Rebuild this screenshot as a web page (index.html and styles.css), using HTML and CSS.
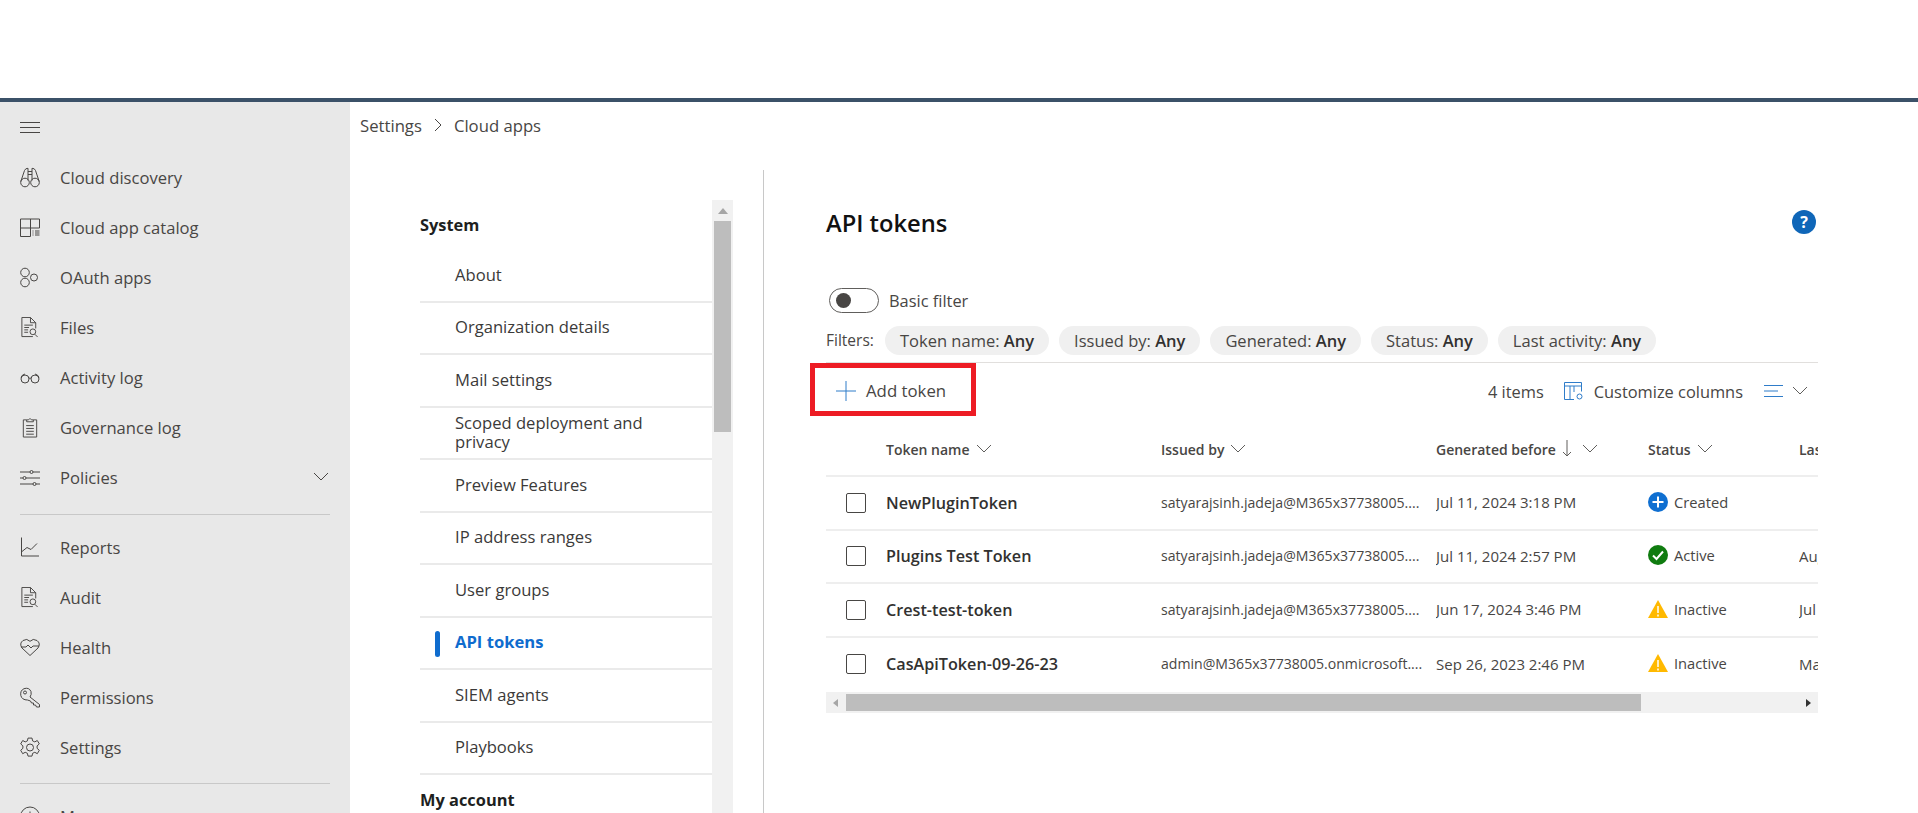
FILE: index.html
```html
<!DOCTYPE html>
<html lang="en">

<head>
    <meta charset="UTF-8">
    <title>Settings - Cloud apps</title>
    <link rel="stylesheet" href="styles.css">
</head>

<body>
    <header class="topbar"></header>

    <div class="layout">
        <nav class="sidebar">
            <div class="menu-btn">
                <svg width="20" height="12" viewBox="0 0 20 12"><path d="M0 .5h20M0 5.500h20M0 10.500h20"/></svg>
            </div>
            <ul class="side-list">
                <li><svg viewBox="0 0 20 20"><circle cx="5" cy="15" r="4.300"/><circle cx="15" cy="15" r="4.300"/><path d="M.8 14 4.500 3Q5.500 .6 8 .8V13M19.200 14 15.500 3Q14.500 .6 12 .8V13M8 7h4M8 4h4"/></svg>Cloud discovery</li>
                <li><svg viewBox="0 0 20 20"><path d="M.5 1.500h19v9h-9v8.500h-10zM.5 10.500h10M10.500 1.500v9M12.500 13.500h1M12.500 15.500h1M12.500 17.500h1M15 13.500h4.500M15 15.500h4.500M15 17.500h4.500"/></svg>Cloud app catalog</li>
                <li><svg viewBox="0 0 20 20"><circle cx="5" cy="5" r="4.300"/><circle cx="5" cy="15" r="4.300"/><circle cx="14" cy="10" r="3.500"/></svg>OAuth apps</li>
                <li><svg viewBox="0 0 20 22"><path d="M13 20.500H1.500V.5h9l5.500 5.500v6M10.500 .5v5.500H16M4 8.500h9M4 11h5M4 13.500h4M4 16h4"/><circle cx="13" cy="15.500" r="3"/><path d="m15 18 3 3"/></svg>Files</li>
                <li><svg viewBox="0 0 20 20"><circle cx="5" cy="11.500" r="4"/><circle cx="15" cy="11.500" r="4"/><path d="M9 11q1-1.500 2 0M1 10q1-3 4-3.500M19 10q-1-3-4-3.500"/></svg>Activity log</li>
                <li><svg viewBox="0 0 20 22"><path d="M6.500 3H3v18h14V3h-3.500M6.500 5V3h2Q10 0 11.500 3h2v2zM6 9h8M6 12h8M6 15h8M6 18h8"/></svg>Governance log</li>
                <li class="has-sub"><svg viewBox="0 0 20 20"><path d="M0 4.500h10M13 4.500h7M0 10.500h3M6 10.500h14M0 16.500h13M16 16.500h4"/><circle cx="11.500" cy="4.500" r="1.500"/><circle cx="4.500" cy="10.500" r="1.500"/><circle cx="14.500" cy="16.500" r="1.500"/></svg>Policies<svg class="chev" viewBox="0 0 16 16"><path d="m1 4 7 7 7-7"/></svg></li>
            </ul>
            <hr class="side-sep">
            <ul class="side-list">
                <li><svg viewBox="0 0 20 20"><path d="M1.500 0v18.500H19M2 14l5-4 4 2 6-6"/></svg>Reports</li>
                <li><svg viewBox="0 0 20 22"><path d="M13 20.500H1.500V.5h9l5.500 5.500v6M10.500 .5v5.500H16M4 8.500h9M4 11h5M4 13.500h4M4 16h4"/><circle cx="13" cy="15.500" r="3"/><path d="m15 18 3 3"/></svg>Audit</li>
                <li><svg viewBox="0 0 20 20"><path d="M10 18 2 10.500Q-1 6 3 3q4-2.500 7 .8Q13 .5 17 3q4 3 1 7.500zM1 9.500h5l2-2 3 3 2-2h6"/></svg>Health</li>
                <li><svg viewBox="0 0 20 20"><path d="M10 9.500 19.500 17v2.500h-3l-1-2h-2v-2h-2l-1-2-3-1Q2 12.500.8 8 0 3 4 1.200 9-.5 11 4q.8 3-1 5.500z"/><circle cx="5" cy="5" r="1.500"/></svg>Permissions</li>
                <li><svg viewBox="0 0 20 20"><circle cx="10" cy="10" r="3.500"/><path d="M8 .6h4l.6 2.800 2.200 1 2.500-1.400 2 3.400-2.200 2v2.400l2.200 2-2 3.400-2.500-1.400-2.200 1-.6 2.800H8l-.6-2.800-2.200-1-2.500 1.400-2-3.400 2.200-2V8.400l-2.200-2 2-3.400 2.500 1.400 2.200-1z"/></svg>Settings</li>
            </ul>
            <hr class="side-sep">
            <ul class="side-list">
                <li><svg viewBox="0 0 20 20"><circle cx="10" cy="10" r="9.500"/><path d="M10 9v6M10 5v1.500"/></svg>More resources</li>
            </ul>
        </nav>

        <main class="main">
            <div class="crumbs">
                <span>Settings</span>
                <svg width="10" height="14" viewBox="0 0 10 14"><path d="m2 1 6 6-6 6"/></svg>
                <span>Cloud apps</span>
            </div>

            <div class="settings">
                <div class="settings-nav">
                    <div class="nav-list">
                        <h3>System</h3>
                        <a>About</a>
                        <a>Organization details</a>
                        <a>Mail settings</a>
                        <a class="two-line">Scoped deployment and privacy</a>
                        <a>Preview Features</a>
                        <a>IP address ranges</a>
                        <a>User groups</a>
                        <a class="active">API tokens</a>
                        <a>SIEM agents</a>
                        <a>Playbooks</a>
                        <h3>My account</h3>
                    </div>
                    <div class="nav-scroll">
                        <span class="arrow-up"></span>
                        <div class="nav-thumb"></div>
                    </div>
                </div>

                <section class="content">
                    <div class="title-row">
                        <h1>API tokens</h1>
                        <span class="help">?</span>
                    </div>

                    <div class="toggle-row">
                        <span class="toggle"></span>
                        <span>Basic filter</span>
                    </div>

                    <div class="filters">
                        <span class="filters-label">Filters:</span>
                        <span class="chip">Token name: <b>Any</b></span>
                        <span class="chip">Issued by: <b>Any</b></span>
                        <span class="chip">Generated: <b>Any</b></span>
                        <span class="chip">Status: <b>Any</b></span>
                        <span class="chip">Last activity: <b>Any</b></span>
                    </div>

                    <div class="toolbar">
                        <button class="add-btn">
                            <svg width="20" height="20" viewBox="0 0 20 20"><path d="M0 10h20M10 0v20"/></svg>
                            Add token
                        </button>
                        <div class="tools">
                            <span>4 items</span>
                            <span class="tool">
                                <svg width="20" height="20" viewBox="0 0 20 20"><path d="M.5 18.500V1.500h17v9M.5 5h17M6 5v13.500M.5 18.500H10M10 5v6"/><circle cx="15.500" cy="15.500" r="2.500"/></svg>
                                Customize columns
                            </span>
                            <span class="tool density">
                                <svg width="20" height="16" viewBox="0 0 20 16"><path d="M0 2.500h19M0 8h14M0 13.500h19"/></svg>
                                <svg class="chev-sm" viewBox="0 0 16 16"><path d="m1 4 7 7 7-7"/></svg>
                            </span>
                        </div>
                    </div>

                    <div class="table">
                        <div class="row head">
                            <span></span>
                            <span class="th">Token name<svg class="chev-sm" viewBox="0 0 16 16"><path d="m1 4 7 7 7-7"/></svg></span>
                            <span class="th">Issued by<svg class="chev-sm" viewBox="0 0 16 16"><path d="m1 4 7 7 7-7"/></svg></span>
                            <span class="th">Generated before<svg class="arrow-down" viewBox="0 0 10 18"><path d="M5 0v16M1 12l4 4 4-4"/></svg><svg class="chev-sm" viewBox="0 0 16 16"><path d="m1 4 7 7 7-7"/></svg></span>
                            <span class="th">Status<svg class="chev-sm" viewBox="0 0 16 16"><path d="m1 4 7 7 7-7"/></svg></span>
                            <span class="th">Last activity</span>
                        </div>
                        <div class="row">
                            <span class="check"></span>
                            <span class="name">NewPluginToken</span>
                            <span class="cell">satyarajsinh.jadeja@M365x37738005....</span>
                            <span class="cell date">Jul 11, 2024 3:18 PM</span>
                            <span class="cell status"><svg viewBox="0 0 20 20"><circle cx="10" cy="10" r="10" fill="#0f6fd1"/><path d="M10 4.500v11M4.500 10h11" stroke="#fff" stroke-width="2"/></svg>Created</span>
                            <span class="cell date"></span>
                        </div>
                        <div class="row">
                            <span class="check"></span>
                            <span class="name">Plugins Test Token</span>
                            <span class="cell">satyarajsinh.jadeja@M365x37738005....</span>
                            <span class="cell date">Jul 11, 2024 2:57 PM</span>
                            <span class="cell status"><svg viewBox="0 0 20 20"><circle cx="10" cy="10" r="10" fill="#107c10"/><path d="m5 10.500 3.500 3.500L15 6.500" fill="none" stroke="#fff" stroke-width="2"/></svg>Active</span>
                            <span class="cell date">Aug 1, 2024</span>
                        </div>
                        <div class="row">
                            <span class="check"></span>
                            <span class="name">Crest-test-token</span>
                            <span class="cell">satyarajsinh.jadeja@M365x37738005....</span>
                            <span class="cell date">Jun 17, 2024 3:46 PM</span>
                            <span class="cell status"><svg viewBox="0 0 20 20"><path d="M10 1 20 19H0z" fill="#ffb900"/><path d="M10 7v7M10 15.500v2" stroke="#fff" stroke-width="1.500"/></svg>Inactive</span>
                            <span class="cell date">Jul 1, 2024</span>
                        </div>
                        <div class="row last">
                            <span class="check"></span>
                            <span class="name">CasApiToken-09-26-23</span>
                            <span class="cell">admin@M365x37738005.onmicrosoft....</span>
                            <span class="cell date">Sep 26, 2023 2:46 PM</span>
                            <span class="cell status"><svg viewBox="0 0 20 20"><path d="M10 1 20 19H0z" fill="#ffb900"/><path d="M10 7v7M10 15.500v2" stroke="#fff" stroke-width="1.500"/></svg>Inactive</span>
                            <span class="cell date">Mar 1, 2024</span>
                        </div>
                    </div>

                    <div class="h-scroll">
                        <span class="arrow-left"></span>
                        <div class="h-thumb"></div>
                        <span class="arrow-right"></span>
                    </div>
                </section>
            </div>
        </main>
    </div>
</body>

</html>
```

FILE: styles.css
```css
* {
    box-sizing: border-box;
}

html,
body {
    height: 100%;
}

body {
    margin: 0;
    height: 813px;
    overflow: hidden;
    background: #fff;
    color: #323130;
    font-family: "Open Sans", "Liberation Sans", sans-serif;
    font-size: 16.400px;
}

svg {
    fill: none;
    stroke: #484644;
    stroke-width: 1;
    flex-shrink: 0;
}

.topbar {
    height: 102px;
    border-bottom: 4px solid #3b5168;
}

.layout {
    display: flex;
    height: 711px;
}

/* left rail */
.sidebar {
    width: 350px;
    flex-shrink: 0;
    background: #e8e8e8;
    padding: 0 20px;
    overflow: hidden;
}

.menu-btn {
    height: 51px;
    display: flex;
    align-items: center;
}

.side-list {
    list-style: none;
    margin: 0;
    padding: 0;
}

.side-list li {
    display: flex;
    align-items: center;
    gap: 20px;
    height: 50px;
    padding-bottom: 2px;
    color: #484644;
    font-size: 16.600px;
}

.side-list li > svg:first-child {
    width: 20px;
    height: 21px;
}

.has-sub .chev {
    width: 16px;
    height: 16px;
    margin-left: auto;
    margin-right: 1px;
}

.side-sep {
    border: 0;
    border-top: 1px solid #c8c8c8;
    margin: 11px 0 8px;
    width: 310px;
}

.side-list + .side-sep + .side-list + .side-sep {
    margin-top: 10px;
}

/* main area */
.main {
    flex: 1;
    padding-left: 10px;
    min-width: 0;
}

.crumbs {
    display: flex;
    align-items: center;
    gap: 11px;
    height: 46px;
    color: #484644;
    font-size: 16.700px;
}

.settings {
    display: flex;
    height: 665px;
    padding-top: 22px;
}

.settings-nav {
    display: flex;
    width: 373px;
    padding-left: 60px;
    padding-top: 30px;
}

.nav-list {
    width: 292px;
    flex-shrink: 0;
}

.nav-list h3 {
    margin: 0;
    padding-bottom: 2px;
    font-size: 16.400px;
    font-weight: 700;
    color: #201f1e;
    height: 50px;
    display: flex;
    align-items: center;
}

.nav-list a {
    display: flex;
    align-items: center;
    height: 52.500px;
    padding: 0 90px 2px 35px;
    border-bottom: 2px solid #eaeaea;
    color: #3b3a39;
    font-size: 16.600px;
    line-height: 19px;
}

.nav-list a.two-line {
    padding-right: 40px;
}

.nav-list a.active {
    position: relative;
    color: #0f6cce;
    font-weight: 700;
}

.nav-list a.active::before {
    content: "";
    position: absolute;
    left: 15px;
    top: 13px;
    width: 5px;
    height: 26px;
    border-radius: 3px;
    background: #0f6cce;
}

.nav-scroll {
    width: 21px;
    flex-shrink: 0;
    height: 613px;
    background: #f1f1f1;
    padding: 0 2px;
}

.arrow-up {
    display: block;
    width: 0;
    margin: 8px auto 7px;
    border: 5px solid transparent;
    border-top: 0;
    border-bottom: 6px solid #a6a6a6;
}

.nav-thumb {
    height: 211px;
    background: #bdbdbd;
}

/* right content */
.content {
    width: 1055px;
    margin-left: 30px;
    border-left: 1px solid #c8c8c8;
    padding-left: 62px;
    flex-shrink: 0;
}

.title-row {
    display: flex;
    justify-content: space-between;
    align-items: center;
    height: 106px;
    padding-right: 2px;
}

h1 {
    margin: 0;
    font-size: 23.700px;
    font-weight: 600;
    color: #111;
}

.help {
    width: 24px;
    height: 24px;
    margin-top: -3px;
    border-radius: 50%;
    background: #0f66b8;
    color: #fff;
    font-size: 16px;
    font-weight: 700;
    display: flex;
    align-items: center;
    justify-content: center;
}

.toggle-row {
    display: flex;
    align-items: center;
    gap: 10px;
    height: 25px;
    margin-top: 12px;
    padding-left: 3px;
    color: #484644;
}

.toggle {
    position: relative;
    width: 50px;
    height: 25px;
    border: 1px solid #605e5c;
    border-radius: 13px;
}

.toggle::after {
    content: "";
    position: absolute;
    left: 6px;
    top: 4px;
    width: 15px;
    height: 15px;
    border-radius: 50%;
    background: #484644;
}

.filters {
    display: flex;
    align-items: flex-end;
    gap: 10px;
    height: 50px;
    border-bottom: 1px solid #e1dfdd;
    padding-bottom: 7px;
}

.filters-label {
    width: 49px;
    margin-bottom: 4px;
    font-size: 15.500px;
    white-space: nowrap;
    color: #484644;
}

.chip {
    height: 29px;
    padding: 0 15px;
    border-radius: 15px;
    background: #f0f0f0;
    color: #484644;
    font-size: 16.500px;
    line-height: 30px;
    white-space: nowrap;
}

.chip b {
    font-weight: 600;
    color: #323130;
}

.toolbar {
    display: flex;
    align-items: center;
    justify-content: space-between;
    height: 53px;
    color: #484644;
}

.add-btn {
    display: flex;
    align-items: center;
    gap: 10px;
    width: 166px;
    height: 53px;
    margin-left: -16px;
    padding: 2px 0 0 21px;
    border: 5px solid #ed1c24;
    background: #fff;
    color: #484644;
    font: inherit;
    font-size: 16.800px;
}

.add-btn svg,
.tool svg:first-child {
    stroke: #2f7cc9;
}

.tools {
    display: flex;
    align-items: center;
    gap: 20px;
    padding-right: 10px;
    padding-top: 3px;
}

.tool {
    display: flex;
    align-items: center;
    gap: 10px;
}

.density {
    gap: 8px;
    margin-left: 1px;
}

.chev-sm {
    width: 16px;
    height: 16px;
    stroke: #605e5c;
}

/* table */
.table {
    overflow: hidden;
}

.row {
    display: grid;
    grid-template-columns: 60px 275px 275px 212px 151px 100px;
    align-items: center;
    height: 53.500px;
    border-bottom: 2px solid #eee;
    white-space: nowrap;
}

.row.last {
    border-bottom: 0;
}

.row.head {
    height: 61px;
    padding-top: 7px;
    font-size: 14px;
    font-weight: 600;
    color: #484644;
}

.th {
    display: flex;
    align-items: center;
    gap: 6px;
}

.arrow-down {
    width: 10px;
    height: 18px;
    margin-right: 4px;
    stroke: #605e5c;
}

.check {
    width: 20px;
    height: 20px;
    margin-left: 20px;
    border: 1px solid #484644;
    border-radius: 2px;
}

.name {
    font-size: 16.200px;
    font-weight: 600;
    color: #323130;
}

.cell {
    padding-bottom: 1px;
    font-size: 14.100px;
    color: #484644;
    overflow: hidden;
}

.date {
    font-size: 15px;
}

.status {
    display: flex;
    align-items: center;
    gap: 6px;
    padding-bottom: 2px;
    font-size: 14.700px;
}

.status svg {
    width: 20px;
    height: 20px;
    stroke: none;
}

.h-scroll {
    display: flex;
    align-items: center;
    height: 21px;
    margin-top: 1px;
    background: #f1f1f1;
}

.arrow-left,
.arrow-right {
    width: 0;
    margin: 0 7px;
    border: 4px solid transparent;
}

.arrow-left {
    border-left: 0;
    border-right: 5px solid #a6a6a6;
}

.h-thumb {
    width: 795px;
    height: 17px;
    margin-left: 1px;
    background: #bdbdbd;
}

.arrow-right {
    margin-left: auto;
    border-right: 0;
    border-left: 5px solid #333;
}
```
